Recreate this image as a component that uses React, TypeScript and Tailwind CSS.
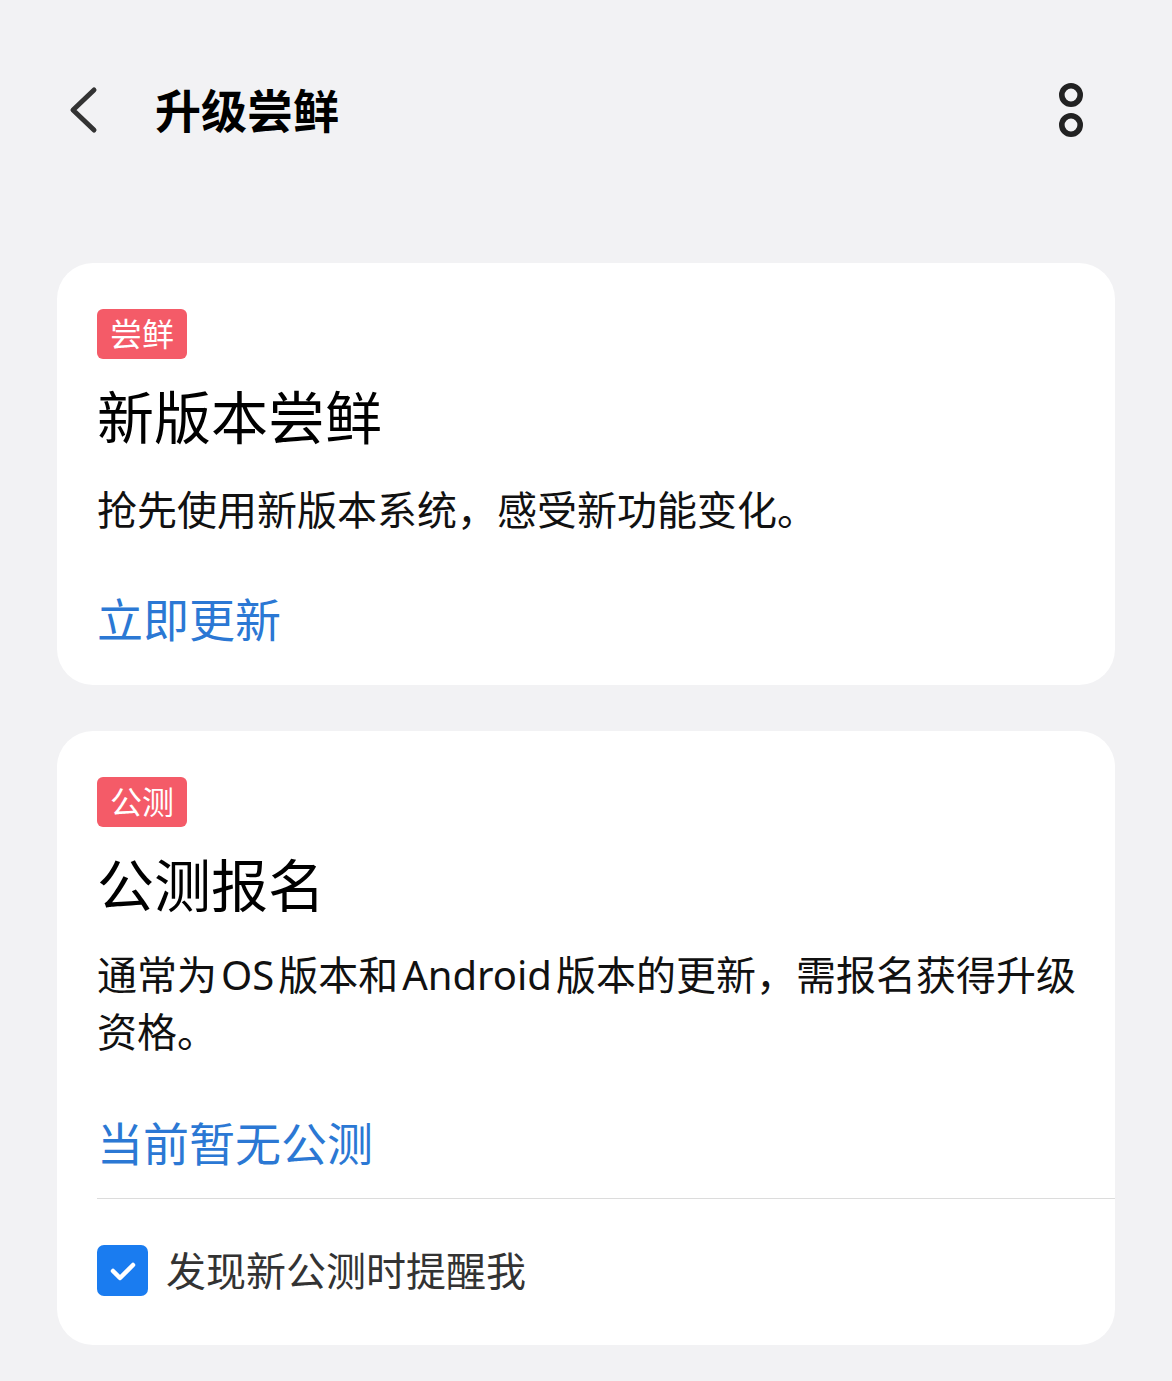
import React from "react";

const font = { fontFamily: '"Noto Sans", "Noto Sans CJK SC", sans-serif' };

function Tag({ text }: { text: string }) {
  return (
    <div className="flex h-[50px] w-[90px] items-center justify-center rounded-[6px] bg-[#f45b68] text-[32px] leading-none text-white">
      {text}
    </div>
  );
}

export default function App() {
  return (
    <div className="min-h-[1381px] w-[1172px] bg-[#f2f2f4] pb-[35px]" style={font}>
      {/* header */}
      <div className="flex h-[220px] items-center pl-[68px] pr-[86px]">
        <svg width="32" height="48" viewBox="0 0 32 48" className="shrink-0">
          <path d="M26 4 L5 24 L26 44" fill="none" stroke="#333" strokeWidth="5" strokeLinecap="round" strokeLinejoin="round" />
        </svg>
        <div className="ml-[55px] text-[46px] font-bold leading-none text-black">升级尝鲜</div>
        <div className="flex-1" />
        <svg width="30" height="60" viewBox="0 0 30 60" className="shrink-0">
          <circle cx="15" cy="15" r="9.2" fill="none" stroke="#222" strokeWidth="5.6" />
          <circle cx="15" cy="45" r="9.2" fill="none" stroke="#222" strokeWidth="5.6" />
        </svg>
      </div>

      {/* card 1 */}
      <div className="mx-[57px] mt-[43px] rounded-[36px] bg-white pb-[43px] pl-[40px] pr-[40px] pt-[46px]">
        <Tag text="尝鲜" />
        <div className="mt-[30px] text-[57px] leading-none text-black">新版本尝鲜</div>
        <div className="mt-[44px] text-[40px] leading-none text-[#111]">抢先使用新版本系统，感受新功能变化。</div>
        <div className="mt-[66px] text-[46px] leading-none text-[#2b78d4]">立即更新</div>
      </div>

      {/* card 2 */}
      <div className="mx-[57px] mt-[46px] rounded-[36px] bg-white pb-[49px] pl-[40px] pt-[46px]">
        <Tag text="公测" />
        <div className="mt-[30px] text-[57px] leading-none text-black">公测报名</div>
        <div className="mt-[32px] pr-[20px] text-[40px] leading-[57px] text-[#111]">
          {"通常为\u200AOS\u200A版本和\u200AAndroid\u200A版本的更新，需报名获得升级资格。"}
        </div>
        <div className="mt-[60px] text-[46px] leading-none text-[#2b78d4]">当前暂无公测</div>
        <div className="mt-[32px] h-px bg-[#dcdcdc]" />
        <div className="mt-[46px] flex items-center">
          <div className="flex h-[51px] w-[51px] items-center justify-center rounded-[7px] bg-[#1a7cf0]">
            <svg width="28" height="22" viewBox="0 0 28 22">
              <path d="M4 11 L11 18 L24 5" fill="none" stroke="white" strokeWidth="4.5" strokeLinecap="round" strokeLinejoin="round" />
            </svg>
          </div>
          <div className="ml-[18px] text-[40px] leading-none text-[#333]">发现新公测时提醒我</div>
        </div>
      </div>
    </div>
  );
}
